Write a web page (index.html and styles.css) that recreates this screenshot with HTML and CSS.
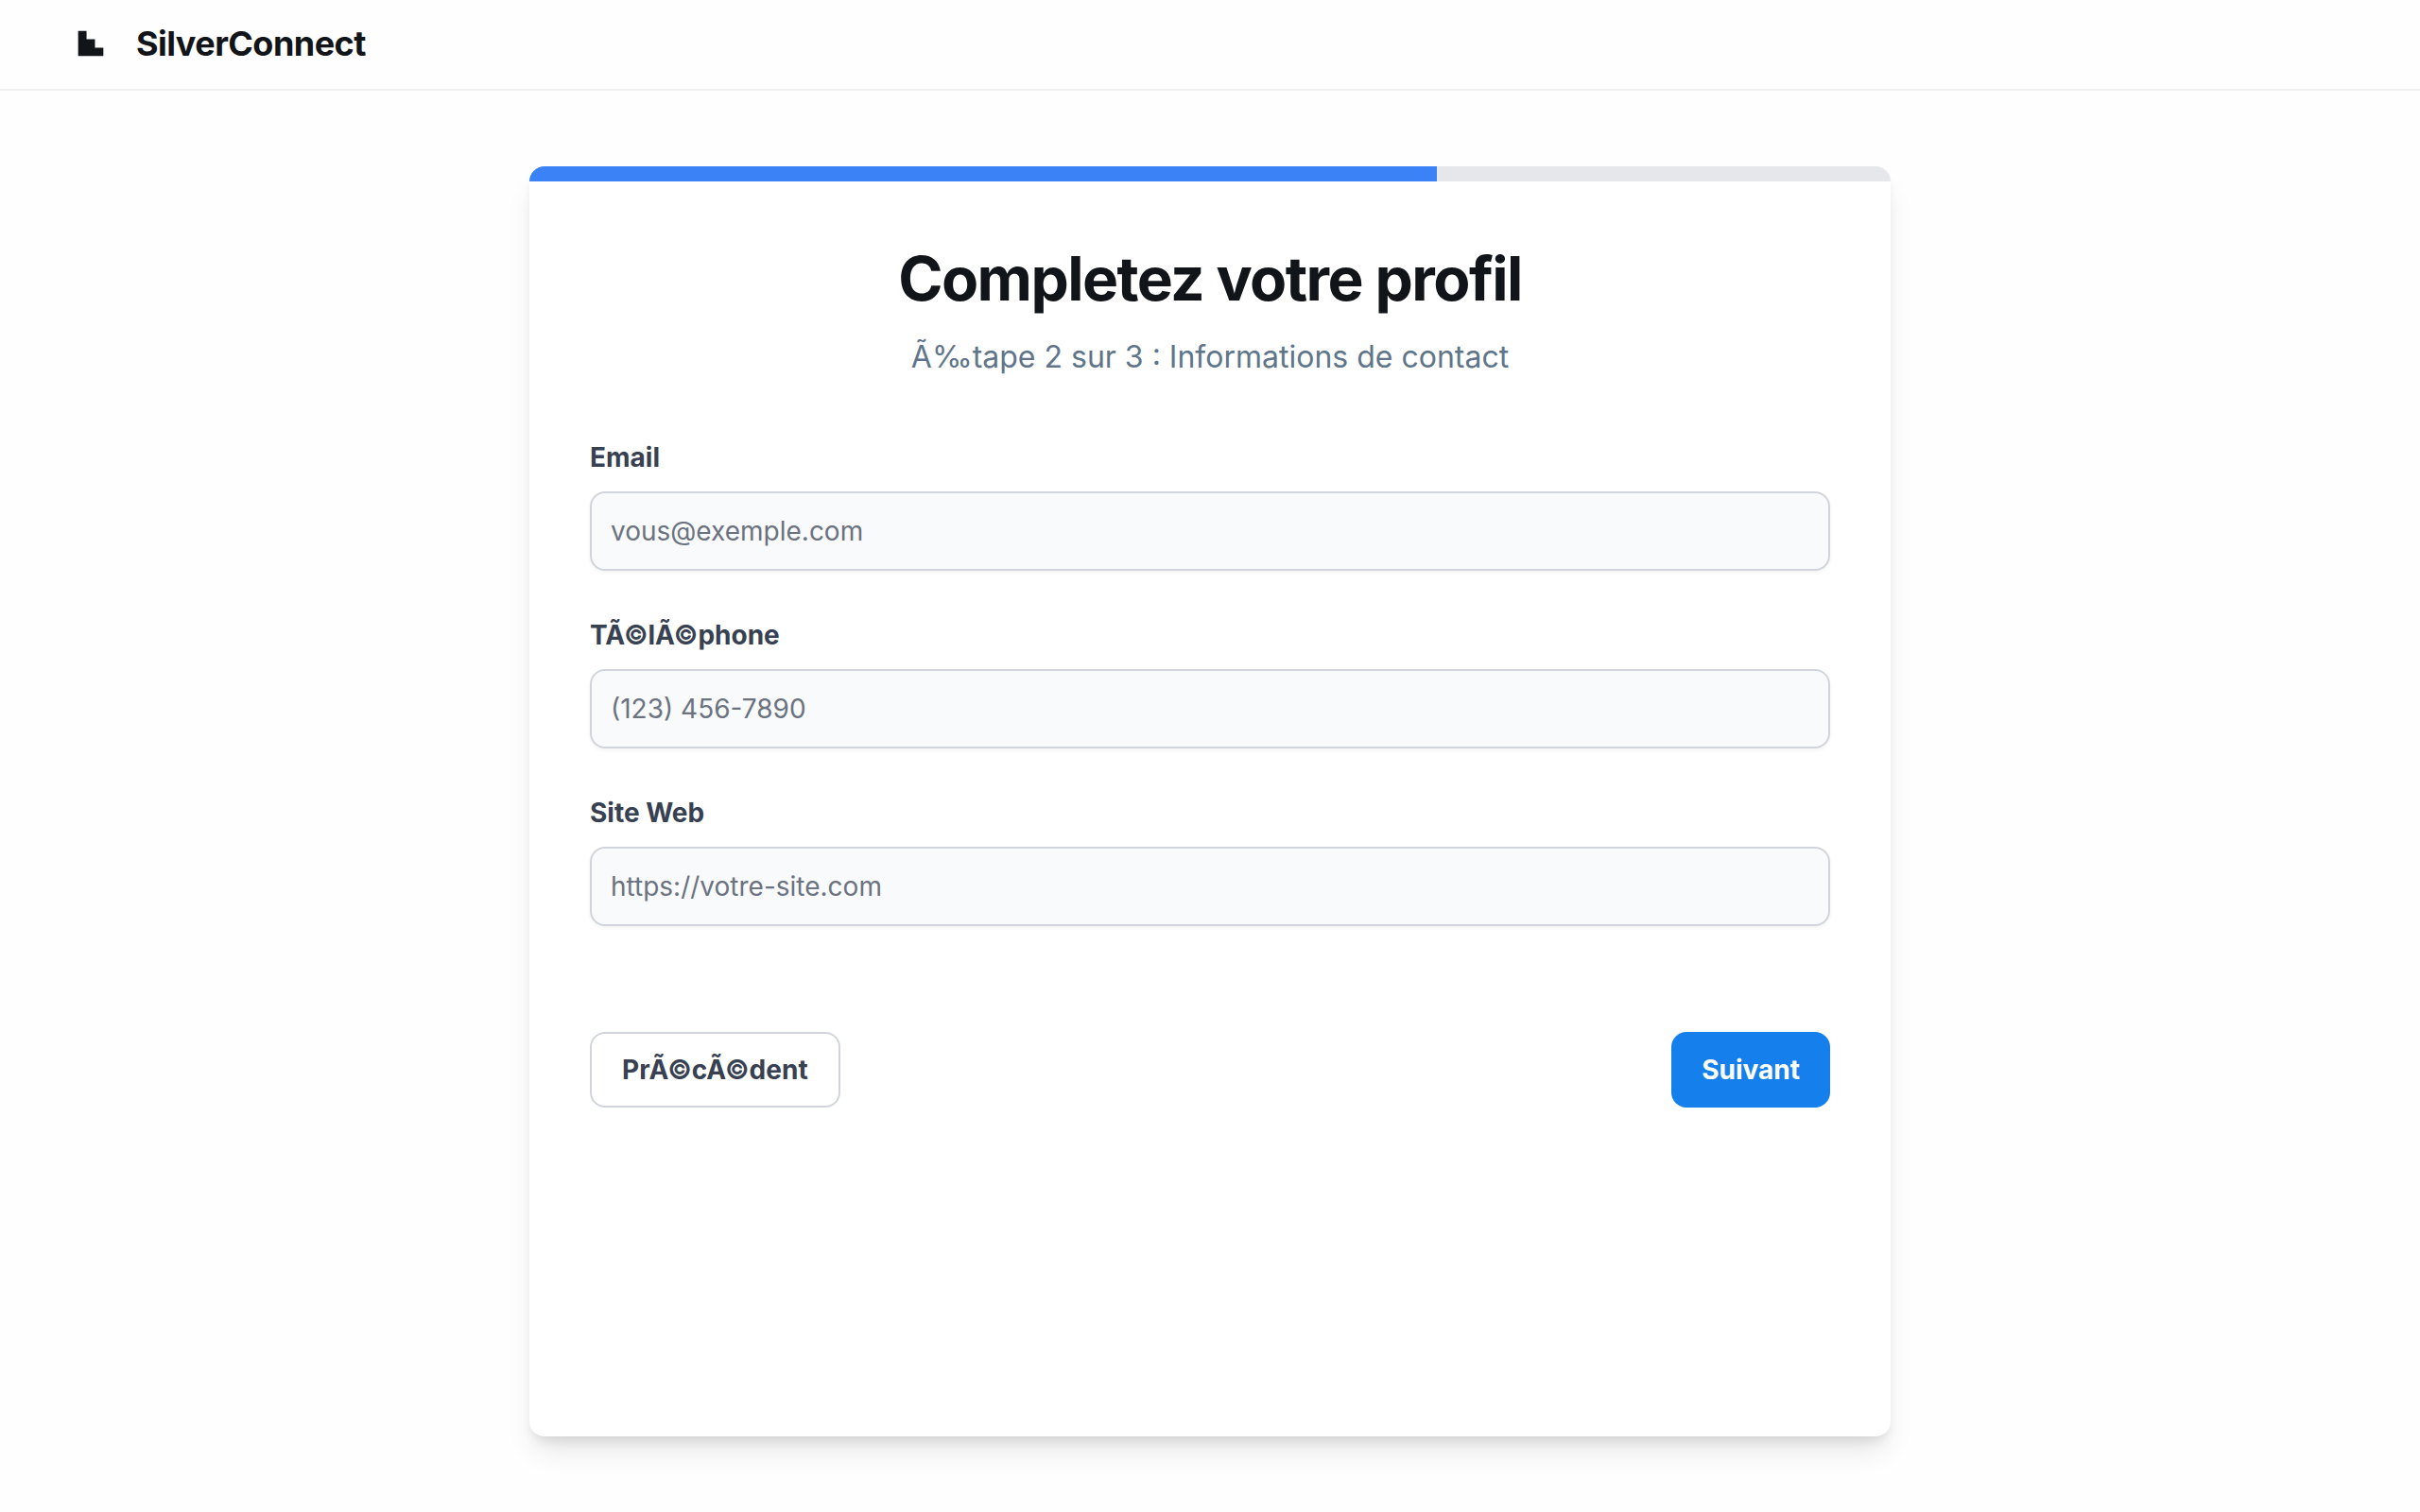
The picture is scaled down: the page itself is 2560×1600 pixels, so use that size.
FILE: index.html
```html
<!DOCTYPE html>
<html lang="fr">
<head>
  <meta charset="utf-8">
  <meta name="viewport" content="width=device-width, initial-scale=1">
  <title>SilverConnect</title>
  <link rel="stylesheet" href="styles.css">
</head>
<body>
  <header class="site-header">
    <svg class="logo" viewBox="0 0 48 48" aria-hidden="true"><path d="M4 4H17.3334V17.3334H30.6666V30.6666H44V44H4V4Z" fill="currentColor"/></svg>
    <span class="brand">SilverConnect</span>
  </header>
  <main class="page">
    <section class="card">
      <div class="progress"><div class="progress-bar"></div></div>
      <div class="card-body">
        <h1 class="title">Completez votre profil</h1>
        <p class="subtitle">Ã‰tape 2 sur 3 : Informations de contact</p>
        <form class="form">
          <div class="field">
            <label class="label" for="email">Email</label>
            <input class="input" id="email" type="email" placeholder="vous@exemple.com">
          </div>
          <div class="field">
            <label class="label" for="phone">TÃ©lÃ©phone</label>
            <input class="input" id="phone" type="tel" placeholder="(123) 456-7890">
          </div>
          <div class="field">
            <label class="label" for="website">Site Web</label>
            <input class="input" id="website" type="url" placeholder="https://votre-site.com">
          </div>
          <div class="actions">
            <button class="button button-secondary" type="button">PrÃ©cÃ©dent</button>
            <button class="button button-primary" type="submit">Suivant</button>
          </div>
        </form>
      </div>
    </section>
  </main>
</body>
</html>
```
FILE: styles.css
```css
* {
  box-sizing: border-box;
}

body {
  margin: 0;
  min-height: 100vh;
  display: flex;
  flex-direction: column;
  background: #fefefe;
  color: #111418;
  font-family: Inter, "Noto Sans", sans-serif;
  font-size: 28px;
  line-height: 40px;
}

.site-header {
  display: flex;
  align-items: center;
  gap: 32px;
  padding: 24px 80px 26px;
  border-bottom: 2px solid #f0f0f1;
}

.logo {
  width: 32px;
  height: 32px;
}

.brand {
  font-size: 36px;
  font-weight: 700;
  line-height: 44px;
  letter-spacing: -0.015em;
}

.page {
  flex: 1;
  display: flex;
  justify-content: center;
  padding: 80px;
}

.card {
  width: 100%;
  max-width: 1440px;
  overflow: hidden;
  border-radius: 16px;
  background: #ffffff;
  box-shadow: 0 20px 30px -6px rgb(0 0 0 / 0.1), 0 8px 12px -4px rgb(0 0 0 / 0.1);
}

.progress {
  height: 16px;
  background: #e5e7eb;
}

.progress-bar {
  width: 66.6667%;
  height: 100%;
  background: #3b82f6;
}

.card-body {
  padding: 64px;
}

.title {
  margin: 0;
  font-size: 64px;
  font-weight: 700;
  line-height: 78px;
  letter-spacing: -0.025em;
  text-align: center;
}

.subtitle {
  margin: 20px 0 62px;
  color: #60758a;
  font-size: 32px;
  line-height: 48px;
  text-align: center;
}

.form {
  display: flex;
  flex-direction: column;
  gap: 48px;
}

.field {
  display: flex;
  flex-direction: column;
  gap: 16px;
}

.label {
  color: #374151;
  font-weight: 700;
}

.input {
  width: 100%;
  padding: 20px;
  border: 2px solid #d1d5db;
  border-radius: 16px;
  background: #f9fafb;
  box-shadow: 0 2px 4px rgb(0 0 0 / 0.05);
  color: #111418;
  font: inherit;
}

.input::placeholder {
  color: #6b7280;
  opacity: 1;
}

.actions {
  display: flex;
  justify-content: space-between;
  padding-top: 64px;
}

.button {
  height: 80px;
  padding: 0 32px;
  border: 0;
  border-radius: 16px;
  font: inherit;
  font-weight: 700;
}

.button-secondary {
  border: 2px solid #d1d5db;
  background: #ffffff;
  color: #374151;
}

.button-primary {
  background: #1580eb;
  color: #ffffff;
}
```
